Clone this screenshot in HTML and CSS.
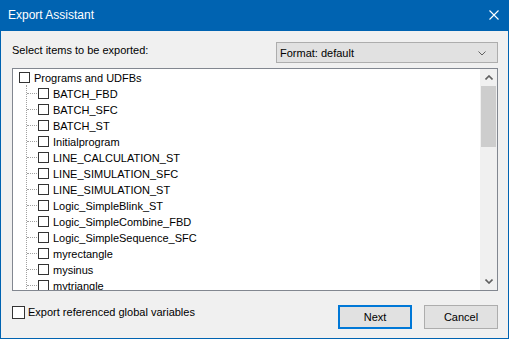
FILE: index.html
```html
<!DOCTYPE html>
<html>
<head>
<meta charset="utf-8">
<link rel="stylesheet" href="styles.css">
</head>
<body>
<div class="window">
  <div class="titlebar">
    <span class="title">Export Assistant</span>
    <svg class="close" width="10" height="10" viewBox="0 0 10 10"><path d="M0.5 0.5 L9.5 9.5 M9.5 0.5 L0.5 9.5" stroke="#fff" stroke-width="1.1" fill="none"/></svg>
  </div>
  <div class="content">
    <div class="header">
      <span class="label">Select items to be exported:</span>
      <div class="combo">
        <span>Format: default</span>
        <svg class="chev" width="8" height="5" viewBox="0 0 8 5"><path d="M0.5 0.5 L4 4 L7.5 0.5" stroke="#606060" stroke-width="1" fill="none"/></svg>
      </div>
    </div>
    <div class="tree">
      <div class="tree-list">
        <div class="row root"><span class="cb"></span><span class="txt">Programs and UDFBs</span></div>
        <div class="children">
          <div class="row child"><span class="cb"></span><span class="txt">BATCH_FBD</span></div>
          <div class="row child"><span class="cb"></span><span class="txt">BATCH_SFC</span></div>
          <div class="row child"><span class="cb"></span><span class="txt">BATCH_ST</span></div>
          <div class="row child"><span class="cb"></span><span class="txt">Initialprogram</span></div>
          <div class="row child"><span class="cb"></span><span class="txt">LINE_CALCULATION_ST</span></div>
          <div class="row child"><span class="cb"></span><span class="txt">LINE_SIMULATION_SFC</span></div>
          <div class="row child"><span class="cb"></span><span class="txt">LINE_SIMULATION_ST</span></div>
          <div class="row child"><span class="cb"></span><span class="txt">Logic_SimpleBlink_ST</span></div>
          <div class="row child"><span class="cb"></span><span class="txt">Logic_SimpleCombine_FBD</span></div>
          <div class="row child"><span class="cb"></span><span class="txt">Logic_SimpleSequence_SFC</span></div>
          <div class="row child"><span class="cb"></span><span class="txt">myrectangle</span></div>
          <div class="row child"><span class="cb"></span><span class="txt">mysinus</span></div>
          <div class="row child"><span class="cb"></span><span class="txt">mytriangle</span></div>
        </div>
      </div>
      <div class="scrollbar">
        <div class="sb-btn"><svg width="8" height="5" viewBox="0 0 8 5"><path d="M0.5 4.5 L4 1 L7.5 4.5" stroke="#606060" stroke-width="1.6" fill="none"/></svg></div>
        <div class="sb-thumb"></div>
        <div class="sb-track"></div>
        <div class="sb-btn"><svg width="8" height="5" viewBox="0 0 8 5"><path d="M0.5 0.5 L4 4 L7.5 0.5" stroke="#606060" stroke-width="1.6" fill="none"/></svg></div>
      </div>
    </div>
    <div class="footer">
      <label class="check"><span class="cb big"></span><span>Export referenced global variables</span></label>
      <div class="buttons">
        <div class="btn default">Next</div>
        <div class="btn">Cancel</div>
      </div>
    </div>
  </div>
</div>
</body>
</html>
```

FILE: styles.css
```css
html, body {
  margin: 0;
  padding: 0;
}
body {
  font-family: "Liberation Sans", Arial, sans-serif;
  font-size: 11px;
  line-height: 13px;
  color: #000;
  background: #f0f0f0;
}
.window {
  width: 509px;
  height: 339px;
  box-sizing: border-box;
  border: 1px solid #0063b1;
  border-top: 0;
  background: #f0f0f0;
  display: flex;
  flex-direction: column;
}
.titlebar {
  height: 31px;
  background: #0063b1;
  color: #fff;
  display: flex;
  align-items: center;
  justify-content: space-between;
  padding: 0 10px 0 8px;
  margin: 0 -1px;
}
.title {
  font-size: 12px;
  padding-bottom: 1px;
}
.close {
  display: block;
  margin-bottom: 1px;
}
.content {
  padding: 11px 10px 0 11px;
  display: flex;
  flex-direction: column;
}
.header {
  display: flex;
  justify-content: space-between;
  align-items: flex-start;
  height: 21px;
}
.label {
  padding-top: 2px;
}
.combo {
  width: 222px;
  height: 21px;
  box-sizing: border-box;
  border: 1px solid #adadad;
  background: #e1e1e1;
  display: flex;
  align-items: center;
  justify-content: space-between;
  padding: 1px 11px 0 3px;
}
.chev {
  display: block;
}
.tree {
  margin-top: 5px;
  height: 223px;
  box-sizing: border-box;
  border: 1px solid #828790;
  background: #fff;
  display: flex;
}
.tree-list {
  flex: 1;
  overflow: hidden;
}
.row {
  height: 16px;
  display: flex;
  align-items: center;
  white-space: nowrap;
}
.txt {
  padding-top: 2px;
}
.root {
  padding-left: 6px;
}
.cb {
  width: 11px;
  height: 11px;
  box-sizing: border-box;
  border: 1px solid #333;
  background: #fff;
  margin-right: 4px;
  margin-top: 1px;
  flex: none;
}
.cb.big {
  width: 13px;
  height: 13px;
  margin-top: 0;
  margin-right: 3px;
}
.children {
  margin-left: 13px;
  border-left: 1px dotted #a0a0a0;
}
.child::before {
  content: "";
  width: 10px;
  height: 0;
  border-top: 1px dotted #a0a0a0;
  margin-right: 1px;
  margin-top: 1px;
}
.scrollbar {
  width: 17px;
  background: #f0f0f0;
  display: flex;
  flex-direction: column;
}
.sb-btn {
  height: 17px;
  display: flex;
  align-items: center;
  justify-content: center;
}
.sb-thumb {
  height: 61px;
  margin: 0 1px;
  background: #cdcdcd;
}
.sb-track {
  flex: 1;
}
.footer {
  margin-top: 14px;
  height: 24px;
  display: flex;
  justify-content: space-between;
  align-items: flex-start;
}
.check {
  display: flex;
  align-items: center;
  margin-top: 1px;
}
.buttons {
  display: flex;
  gap: 12px;
}
.btn {
  width: 74px;
  height: 24px;
  box-sizing: border-box;
  border: 1px solid #adadad;
  background: #e1e1e1;
  display: flex;
  align-items: center;
  justify-content: center;
  padding-top: 1px;
}
.btn.default {
  border: 2px solid #0078d7;
}
```
